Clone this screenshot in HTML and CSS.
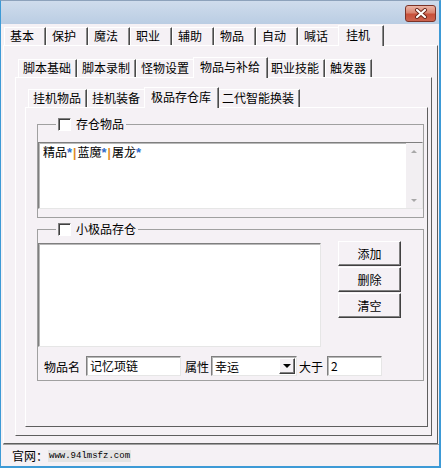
FILE: index.html
```html
<!DOCTYPE html>
<html lang="zh">
<head>
    <meta charset="UTF-8">
    <title>挂机设置</title>
    <link rel="stylesheet" href="styles.css">
</head>
<body>
    <div class="window">
        <div class="titlebar">
            <div class="close-btn">
                <svg width="14" height="11" viewBox="0 0 14 11">
                    <path d="M3 2 L11 9 M11 2 L3 9" stroke="#6a2418" stroke-width="4" stroke-linecap="round"/>
                    <path d="M3 2 L11 9 M11 2 L3 9" stroke="#fff" stroke-width="2.2" stroke-linecap="round"/>
                </svg>
            </div>
        </div>

        <div class="client">
            <div class="tabs tabs-main">
                <div class="tab">基本</div>
                <div class="tab">保护</div>
                <div class="tab">魔法</div>
                <div class="tab">职业</div>
                <div class="tab">辅助</div>
                <div class="tab">物品</div>
                <div class="tab">自动</div>
                <div class="tab">喊话</div>
                <div class="tab active">挂机</div>
            </div>
            <div class="panel panel-main">
                <div class="tabs tabs-sub">
                    <div class="tab">脚本基础</div>
                    <div class="tab">脚本录制</div>
                    <div class="tab">怪物设置</div>
                    <div class="tab active">物品与补给</div>
                    <div class="tab">职业技能</div>
                    <div class="tab">触发器</div>
                </div>
                <div class="panel panel-sub">
                    <div class="tabs tabs-item">
                        <div class="tab">挂机物品</div>
                        <div class="tab">挂机装备</div>
                        <div class="tab active">极品存仓库</div>
                        <div class="tab">二代智能换装</div>
                    </div>
                    <div class="panel panel-item">
                        <fieldset class="group group-store">
                            <legend><span class="check"></span>存仓物品</legend>
                            <div class="memo">
                                <div class="memo-text">精品<span class="star">*</span><span class="bar">|</span>蓝魔<span class="star">*</span><span class="bar">|</span>屠龙<span class="star">*</span></div>
                                <div class="vscroll">
                                    <span class="arrow up"></span>
                                    <span class="arrow down"></span>
                                </div>
                            </div>
                        </fieldset>

                        <fieldset class="group group-small">
                            <legend><span class="check"></span>小极品存仓</legend>
                            <div class="list-row">
                                <div class="listbox"></div>
                                <div class="btns">
                                    <button>添加</button>
                                    <button>删除</button>
                                    <button>清空</button>
                                </div>
                            </div>
                            <div class="form-row">
                                <span class="lbl lbl-name">物品名</span>
                                <div class="edit edit-name">记忆项链</div>
                                <span class="lbl">属性</span>
                                <div class="combo">幸运<span class="drop"></span></div>
                                <span class="lbl lbl-gt">大于</span>
                                <div class="edit edit-num">2</div>
                            </div>
                        </fieldset>
                    </div>
                </div>
            </div>
            <div class="status">官网：<span class="url">www.94lmsfz.com</span></div>
        </div>
    </div>
</body>
</html>
```

FILE: styles.css
```css
* {
    box-sizing: border-box;
}
body {
    margin: 0;
    font-family: "Noto Sans CJK SC", sans-serif;
    font-size: 12px;
    color: #000;
}
.window {
    width: 441px;
    height: 468px;
    border-style: solid;
    border-width: 1px 2px 2px 1px;
    border-color: #8da2bb #3d9ad6 #3d9ad6 #3d9ad6;
    background: #f5f1f5;
    display: flex;
    flex-direction: column;
}
.titlebar {
    height: 23px;
    background: linear-gradient(#cfdcec, #bacde3);
    display: flex;
    justify-content: flex-end;
    align-items: flex-start;
    padding: 4px 3px 0 0;
}
.close-btn {
    width: 31px;
    height: 17px;
    border: 1px solid #7b3328;
    border-radius: 3px;
    background: linear-gradient(#ebb5a6, #d98470 45%, #c8503a 55%, #cc6450);
    display: flex;
    align-items: center;
    justify-content: center;
}
.client {
    flex: 1;
    display: flex;
    flex-direction: column;
    padding-left: 2px;
}

/* tabs */
.tabs {
    height: 21px;
    display: flex;
    align-items: flex-end;
}
.tab {
    height: 18px;
    line-height: 16px;
    padding: 0 5px 0 4px;
    border-top: 1px solid #fff;
    border-left: 1px solid #fff;
    border-right: 1px solid #4a4a4a;
    box-shadow: inset -1px 0 #8a8a8a;
    white-space: nowrap;
}
.tab.active {
    height: 21px;
    line-height: 18px;
    margin: 0 -2px -1px -2px;
    padding: 0 7px 0 6px;
    background: #f5f1f5;
    position: relative;
    z-index: 1;
}
.tabs-main {
    padding-left: 1px;
}
.tabs-main .tab {
    width: 42px;
    padding-left: 5px;
}
.tabs-main .tab.active {
    width: 46px;
    padding-left: 7px;
}
.tabs-sub {
    padding-left: 3px;
}
.tabs-item {
    padding-left: 3px;
    margin-top: 8px;
}

/* panels */
.panel {
    border: 1px solid;
    border-color: #fff #5e5e5e #5e5e5e #fff;
}
.panel-main {
    width: 435px;
    height: 399px;
    padding: 10px 0 0 11px;
}
.panel-sub {
    width: 417px;
    height: 359px;
    padding-left: 9px;
}
.panel-item {
    width: 403px;
    height: 320px;
    padding-left: 11px;
}

/* group boxes */
.group {
    width: 387px;
    margin: 0;
    padding: 0;
    border: 1px solid #a0a0a0;
    min-width: 0;
}
.group legend {
    margin-left: 18px;
    padding: 0 2px;
    height: 14px;
    line-height: 14px;
}
.group-store {
    margin-top: 9px;
    padding-bottom: 8px;
}
.group-small {
    margin-top: 4px;
    padding-bottom: 4px;
}
.check {
    display: inline-block;
    width: 13px;
    height: 13px;
    margin-right: 5px;
    vertical-align: -2px;
    background: #fff;
    border: 1px solid;
    border-color: #808080 #fff #fff #808080;
    box-shadow: inset 1px 1px #404040;
}

.memo {
    height: 67px;
    margin-top: 11px;
    display: flex;
    background: #fff;
    border: 1px solid;
    border-color: #7f7f7f #e6e6e6 #e6e6e6 #7f7f7f;
    box-shadow: inset 1px 1px #b8b8b8;
}
.memo-text {
    flex: 1;
    padding: 1px 3px 1px 4px;
    line-height: 16px;
}
.star {
    color: #2f6bc8;
    font-family: "Liberation Sans", sans-serif;
    font-weight: bold;
    font-size: 13px;
}
.bar {
    color: #e08a20;
    font-family: "Liberation Sans", sans-serif;
    font-weight: bold;
    margin: 0 1px;
}
.vscroll {
    width: 16px;
    background: #f2eff2;
    display: flex;
    flex-direction: column;
    justify-content: space-between;
    align-items: center;
    padding: 7px 0 6px;
}
.arrow {
    width: 0;
    height: 0;
    border-left: 3px solid transparent;
    border-right: 3px solid transparent;
}
.arrow.up {
    border-bottom: 3px solid #a8a8a8;
}
.arrow.down {
    border-top: 3px solid #a8a8a8;
}

.list-row {
    display: flex;
    align-items: flex-start;
    margin-top: 5px;
}
.listbox {
    width: 283px;
    height: 104px;
    margin-top: 2px;
    background: #fff;
    border: 1px solid;
    border-color: #7f7f7f #e6e6e6 #e6e6e6 #7f7f7f;
    box-shadow: inset 1px 1px #b8b8b8;
}
.btns {
    margin-left: 17px;
    display: flex;
    flex-direction: column;
    gap: 1px;
}
.btns button {
    width: 63px;
    height: 25px;
    padding: 0;
    font-family: inherit;
    font-size: 12px;
    color: #000;
    background: #f5f1f5;
    border: 1px solid;
    border-color: #fff #404040 #404040 #fff;
    box-shadow: inset -1px -1px #808080;
}

.form-row {
    display: flex;
    align-items: center;
    height: 20px;
    margin-top: 9px;
}
.lbl {
    margin: 0 2px 0 4px;
}
.lbl-name {
    margin-left: 6px;
    margin-right: 6px;
}
.lbl-gt {
    margin-left: 2px;
    margin-right: 4px;
}
.edit, .combo {
    height: 20px;
    line-height: 17px;
    padding-left: 3px;
    background: #fff;
    border: 1px solid;
    border-color: #7f7f7f #e6e6e6 #e6e6e6 #7f7f7f;
    box-shadow: inset 1px 1px #b8b8b8;
}
.edit-name {
    width: 95px;
}
.edit-num {
    width: 55px;
}
.combo {
    width: 86px;
    display: flex;
    justify-content: space-between;
    align-items: center;
    padding-right: 1px;
}
.drop {
    width: 16px;
    height: 16px;
    background: #f5f1f5;
    border: 1px solid;
    border-color: #fff #404040 #404040 #fff;
    box-shadow: inset -1px -1px #808080;
    display: flex;
    align-items: center;
    justify-content: center;
}
.drop::after {
    content: "";
    border-left: 4px solid transparent;
    border-right: 4px solid transparent;
    border-top: 4px solid #000;
}

.status {
    flex: 1;
    border-top: 1px solid #a0a0a0;
    padding-left: 9px;
    display: flex;
    align-items: center;
}
.url {
    font-family: "Liberation Mono", monospace;
    font-size: 9px;
    background: #e4e4e4;
    padding: 1px 1px;
}
```
